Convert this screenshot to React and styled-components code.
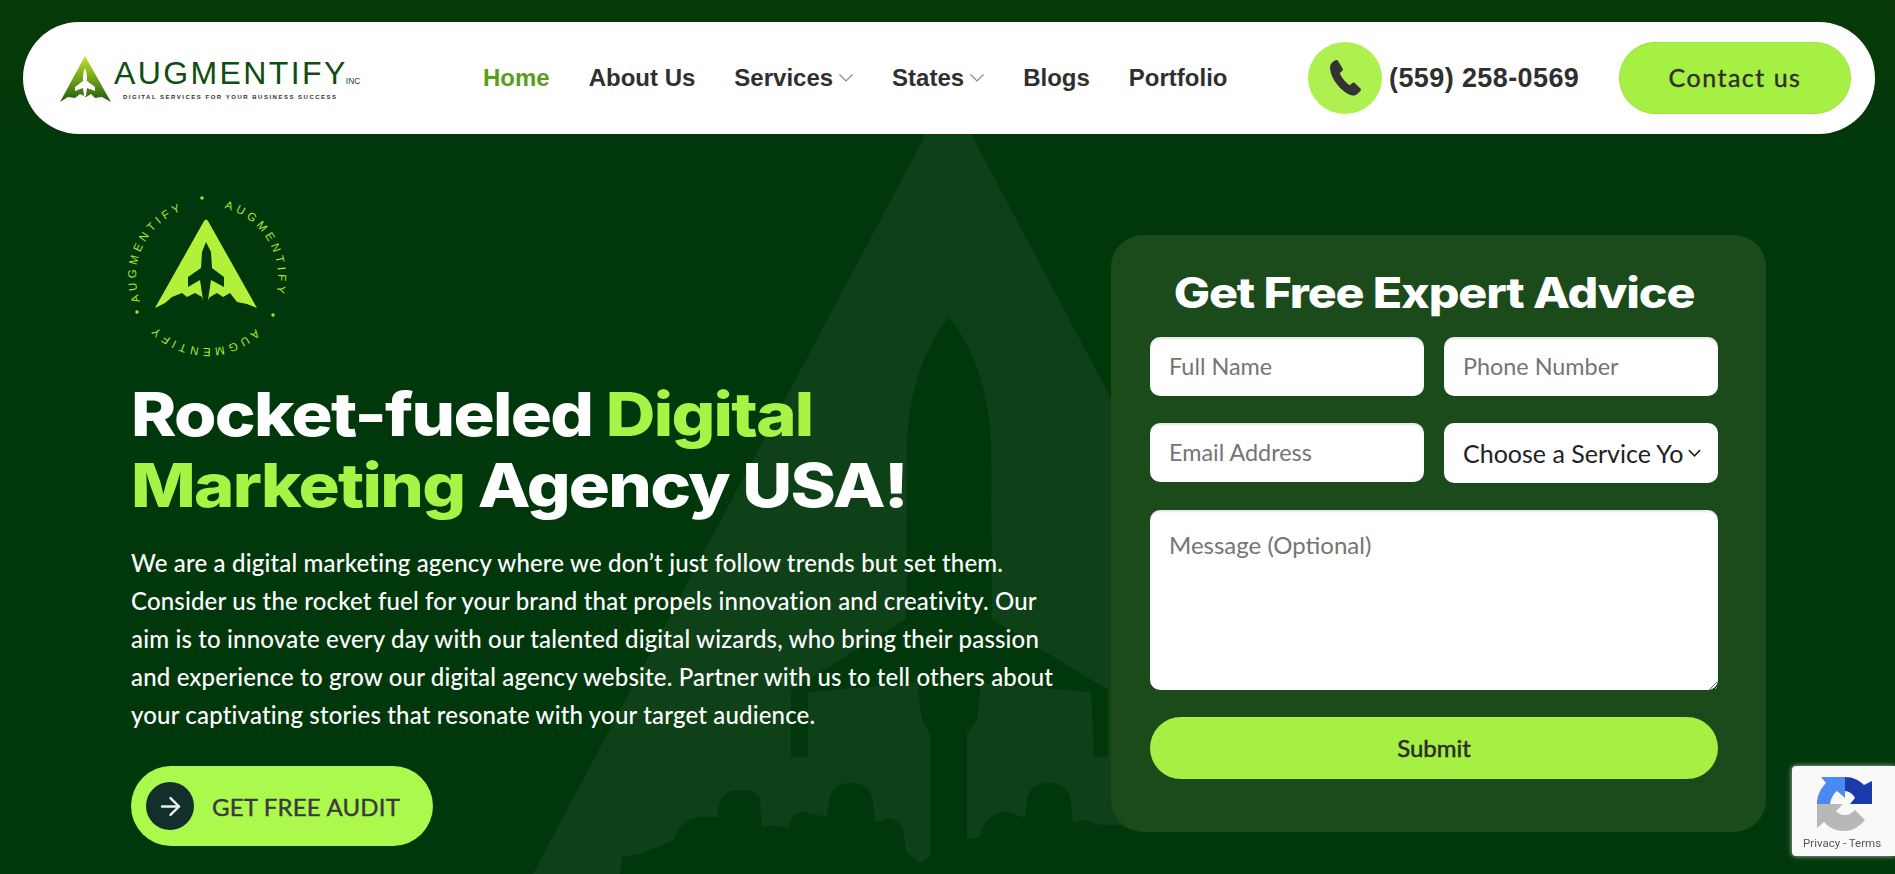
import styled, { createGlobalStyle } from "styled-components";
import { ChevronDown, ArrowRight } from "lucide-react";

const GlobalStyle = createGlobalStyle`
    html, body {
        margin: 0;
        padding: 0;
        background: #01380b;
    }
    * {
        box-sizing: border-box;
    }
`;

const navLinks = [
    { label: "Home", active: true },
    { label: "About Us" },
    { label: "Services", caret: true },
    { label: "States", caret: true },
    { label: "Blogs" },
    { label: "Portfolio" },
];

function Watermark() {
    return (
        <WatermarkSvg viewBox="0 0 1895 874" aria-hidden="true">
            <path fill="#0f4118" d="M926 134 L971 134 L1363 874 L533 874 Z" />
            {/* rocket cut out of the big A */}
            <path
                fill="#01380b"
                d="M949 317 C972 345 989 390 991 440 L992 619 L1108 690 L1108 757 L1094 757 L1091 692 L981 683 L977 720 L967 733 L967 860 L930 860 L930 733 L922 720 L917 683 L808 692 L808 757 L791 757 L791 690 L906 619 L907 440 C909 390 926 345 949 317 Z"
            />
            {/* exhaust clouds */}
            <path
                fill="#01380b"
                d="M620 874 L622 857 L643 853 L674 840 Q680 818 701 817 L718 817 Q716 790 739 790 Q762 790 760 803 L762 827 L774 825 L789 828 Q792 812 804 812 L827 817 L829 800 Q832 783 850 783 Q872 783 873 803 L875 822 L889 818 Q904 820 904 835 L906 852 L921 863 L938 850 L963 840 L980 837 Q985 812 1007 812 L1025 818 L1027 800 Q1030 783 1048 783 Q1070 783 1071 803 L1073 823 L1084 820 L1101 825 L1400 825 L1400 874 Z"
            />
        </WatermarkSvg>
    );
}

function LogoMark() {
    return (
        <svg width="51" height="46" viewBox="0 0 51 46">
            <defs>
                <linearGradient id="logoFill" x1="0" y1="0" x2="0" y2="1">
                    <stop offset="0" stopColor="#c0e52c" />
                    <stop offset="1" stopColor="#1f5c0b" />
                </linearGradient>
            </defs>
            <path
                fill="url(#logoFill)"
                d="M25 0 L51 46 L42 41 L35 42 L31 38 L26 41 L20 38 L15 42 L8 41 L0 46 Z"
            />
            <path
                fill="#fff"
                d="M25 12 C27 16 27 20 27 25 L35 31 L35 35 L27 32 L26 40 L24 40 L23 32 L15 35 L15 31 L23 25 C23 20 23 16 25 12 Z"
            />
        </svg>
    );
}

function Emblem() {
    return (
        <EmblemSvg viewBox="0 0 170 170">
            <defs>
                <path id="ringPath" d="M87 16 A71 71 0 1 1 86.99 16 Z" />
            </defs>
            <path
                fill="#b2f03a"
                d="M84 31 Q86 28 88 31 L137 118 L127 114 L117 112 L110 103 L103 107 L97 103 L90 107 L88 110 L83 110 L82 107 L75 103 L67 107 L62 103 L52 107 L45 113 L35 118 Z"
            />
            <path
                fill="#01380b"
                d="M86 52 L91 62 L92 78 L104 87 L104 97 L91 90 L88 110 L83 110 L80 90 L68 97 L68 87 L81 78 L82 62 Z"
            />
            <EmblemText>
                <textPath href="#ringPath" startOffset="3.9%">AUGMENTIFY</textPath>
            </EmblemText>
            <EmblemText>
                <textPath href="#ringPath" startOffset="38%">AUGMENTIFY</textPath>
            </EmblemText>
            <EmblemText>
                <textPath href="#ringPath" startOffset="69.4%">AUGMENTIFY</textPath>
            </EmblemText>
            <circle cx="82" cy="8" r="1.7" fill="#a6e83a" />
            <circle cx="17" cy="122" r="1.7" fill="#a6e83a" />
            <circle cx="153" cy="125" r="1.7" fill="#a6e83a" />
        </EmblemSvg>
    );
}

function CaptchaLogo() {
    return (
        <svg width="56" height="56" viewBox="0 0 56 56">
            <path fill="#4a8af4" d="M0 28 C0 19 4 12 9 7 L4 1 L28 1 L28 22 L20 15 C17 17 14 22 13 28 Z" />
            <path fill="#1c3aa9" d="M28 1 C36 1 42 4 47 9 L55 5 L55 28 L33 28 L38 22 C36 18 32 15 28 15 Z" />
            <path fill="#b8b8b8" d="M0 28 L26 28 L19 35 C22 38 25 39 28 39 C32 39 35 37 38 34 L48 44 C43 50 36 55 28 55 C19 55 12 52 7 46 L0 52 Z" />
        </svg>
    );
}

function App() {
    return (
        <Page>
            <GlobalStyle />
            <Watermark />
            <Navbar>
                <Logo>
                    <LogoMark />
                    <LogoWords>
                        <LogoName>AUGMENTIFY<LogoInc>INC</LogoInc></LogoName>
                        <LogoTag>DIGITAL SERVICES FOR YOUR BUSINESS SUCCESS</LogoTag>
                    </LogoWords>
                </Logo>
                <NavList>
                    {navLinks.map((link) => (
                        <NavItem key={link.label} $active={link.active}>
                            {link.label}
                            {link.caret && (
                                <Caret viewBox="0 0 14 8">
                                    <polyline points="0.5,0.5 7,7 13.5,0.5" />
                                </Caret>
                            )}
                        </NavItem>
                    ))}
                </NavList>
                <PhoneGroup>
                    <PhoneCircle>
                        <svg width="42" height="42" viewBox="0 0 24 24" fill="#333">
                            <path d="M6.6 1.8 C5.4 2.3 4 3.4 3.6 4.8 C3 7.4 4.4 11.4 7 15 C9.6 18.6 13 21.4 16.2 22 C17.6 22.2 18.4 21.6 19.2 21 L20.8 19.4 C21.2 19 21.2 18.4 20.8 18 L17.6 14.8 C17.2 14.4 16.6 14.4 16.2 14.8 L14.8 16.2 C13 15.4 9.6 11.4 9 9.2 L10.4 8 C10.8 7.6 10.8 7 10.6 6.6 L8 2.2 C7.7 1.7 7.1 1.6 6.6 1.8 Z" />
                        </svg>
                    </PhoneCircle>
                    <PhoneNumber>(559) 258-0569</PhoneNumber>
                </PhoneGroup>
                <ContactButton>Contact us</ContactButton>
            </Navbar>

            <Hero>
                <HeroCopy>
                    <Emblem />
                    <Headline>
                        Rocket-fueled <Accent>Digital</Accent>
                        <br />
                        <Accent>Marketing</Accent> Agency USA!
                    </Headline>
                    <Lead>
                        We are a digital marketing agency where we don’t just follow trends but set them.
                        <br />
                        Consider us the rocket fuel for your brand that propels innovation and creativity. Our
                        <br />
                        aim is to innovate every day with our talented digital wizards, who bring their passion
                        <br />
                        and experience to grow our digital agency website. Partner with us to tell others about
                        <br />
                        your captivating stories that resonate with your target audience.
                    </Lead>
                    <AuditButton>
                        <AuditIcon>
                            <ArrowRight size={29} strokeWidth={2} color="#eee" />
                        </AuditIcon>
                        GET FREE AUDIT
                    </AuditButton>
                </HeroCopy>

                <FormCard>
                    <FormTitle>Get Free Expert Advice</FormTitle>
                    <FieldGrid>
                        <Field placeholder="Full Name" />
                        <Field placeholder="Phone Number" />
                        <Field placeholder="Email Address" />
                        <ServiceSelect>
                            <ServiceText>Choose a Service Yo</ServiceText>
                            <ServiceCaret viewBox="0 0 14 8">
                                <polyline points="1,1 7,7 13,1" />
                            </ServiceCaret>
                        </ServiceSelect>
                    </FieldGrid>
                    <MessageBox placeholder="Message (Optional)" />
                    <SubmitButton>Submit</SubmitButton>
                </FormCard>
            </Hero>

            <CaptchaBadge>
                <CaptchaLogo />
                <CaptchaLinks>Privacy - Terms</CaptchaLinks>
            </CaptchaBadge>
        </Page>
    );
}

const Page = styled.div`
    position: relative;
    height: 874px;
    overflow: hidden;
    background: linear-gradient(#073a08, #01380b 150px);
    padding: 22px 20px 0 23px;
    font-family: "Liberation Sans", Arial, sans-serif;
`;

const WatermarkSvg = styled.svg`
    position: absolute;
    left: 0;
    top: 0;
    width: 1895px;
    height: 874px;
`;

const Navbar = styled.header`
    position: relative;
    height: 112px;
    background: #fff;
    border-radius: 56px;
    display: flex;
    align-items: center;
    padding: 0 24px 0 37px;
`;

const Logo = styled.div`
    display: flex;
    align-items: center;
    gap: 3px;
    width: 423px;
    padding-top: 2px;
`;

const LogoWords = styled.div`
    display: flex;
    flex-direction: column;
    margin-top: 2px;
`;

const LogoName = styled.div`
    font-size: 32px;
    line-height: 26px;
    color: #0f4d12;
    letter-spacing: 2.4px;
    white-space: nowrap;
`;

const LogoInc = styled.span`
    font-size: 8.5px;
    letter-spacing: 0;
    margin-left: -2px;
`;

const LogoTag = styled.div`
    font-size: 6px;
    line-height: 7px;
    font-weight: 700;
    letter-spacing: 1.5px;
    color: #1c3a1c;
    margin-left: 9px;
    white-space: nowrap;
`;

const NavList = styled.nav`
    display: flex;
    align-items: center;
    gap: 39px;
    width: 825px;
`;

const NavItem = styled.a`
    display: flex;
    align-items: center;
    font-size: 24px;
    font-weight: 700;
    color: ${(p) => (p.$active ? "#5a9e1c" : "#2f2f2f")};
`;

const Caret = styled.svg`
    width: 14px;
    height: 8px;
    margin-left: 6px;
    fill: none;
    stroke: #888;
    stroke-width: 1.2;
`;

const PhoneGroup = styled.div`
    display: flex;
    align-items: center;
    gap: 7px;
    width: 311px;
`;

const PhoneCircle = styled.div`
    width: 74px;
    height: 72px;
    border-radius: 50%;
    background: #adf04f;
    display: flex;
    align-items: center;
    justify-content: center;
`;

const PhoneNumber = styled.span`
    font-size: 27px;
    font-weight: 700;
    letter-spacing: 0.4px;
    color: #2f2f2f;
`;

const ContactButton = styled.button`
    width: 232px;
    height: 72px;
    border: 1px solid #9be23f;
    border-radius: 36px;
    background: #a6ef43;
    font-family: "Lato", sans-serif;
    font-size: 25px;
    letter-spacing: 1.5px;
    -webkit-text-stroke: 0.4px #2f2f2f;
    color: #2f2f2f;
    padding-bottom: 3px;
`;

const Hero = styled.main`
    position: relative;
    display: flex;
    justify-content: space-between;
    padding: 56px 109px 0 108px;
`;

const HeroCopy = styled.div`
    width: 950px;
    display: flex;
    flex-direction: column;
    align-items: flex-start;
`;

const EmblemSvg = styled.svg`
    width: 170px;
    height: 170px;
    margin-left: -11px;
`;

const EmblemText = styled.text`
    font-family: "Liberation Sans", sans-serif;
    font-size: 11.5px;
    letter-spacing: 3.8px;
    fill: #a6e83a;
`;

const Headline = styled.h1`
    margin: 19px 0 0;
    font-family: "Inter", sans-serif;
    font-size: 60px;
    font-weight: 800;
    line-height: 71px;
    letter-spacing: -1.5px;
    color: #fff;
    white-space: nowrap;
    transform: scaleX(1.145);
    transform-origin: left center;
`;

const Accent = styled.span`
    color: #a8f446;
`;

const Lead = styled.p`
    margin: 23px 0 0;
    font-family: "Lato", sans-serif;
    font-size: 24px;
    line-height: 38px;
    letter-spacing: 0.17px;
    font-weight: 500;
    color: #fff;
    white-space: nowrap;
`;

const AuditButton = styled.button`
    margin-top: 32px;
    width: 302px;
    height: 80px;
    border: none;
    border-radius: 40px;
    background: #aaf94c;
    display: flex;
    align-items: center;
    gap: 18px;
    padding: 0 0 0 15px;
    font-family: "Lato", sans-serif;
    font-size: 24px;
    letter-spacing: 0.2px;
    -webkit-text-stroke: 0.4px #3a3a3a;
    color: #3a3a3a;
`;

const AuditIcon = styled.span`
    width: 48px;
    height: 48px;
    border-radius: 50%;
    background: #132f2b;
    display: flex;
    align-items: center;
    justify-content: center;
`;

const FormCard = styled.section`
    width: 655px;
    height: 597px;
    margin-top: 45px;
    padding: 33px 48px 0 39px;
    border-radius: 32px;
    background: #1b4a1b;
    display: flex;
    flex-direction: column;
`;

const FormTitle = styled.h2`
    margin: 0;
    text-align: center;
    font-family: "Inter", sans-serif;
    font-size: 42px;
    line-height: 50px;
    font-weight: 800;
    letter-spacing: -1px;
    color: #fff;
    white-space: nowrap;
    transform: scaleX(1.15);
`;

const FieldGrid = styled.div`
    margin-top: 19px;
    display: grid;
    grid-template-columns: 274px 274px;
    column-gap: 20px;
    row-gap: 27px;
    align-items: start;
`;

const Field = styled.input`
    width: 100%;
    height: 59px;
    border: none;
    border-radius: 10px;
    background: #fff;
    box-shadow: inset 0 2px 2px rgba(0, 0, 0, 0.1);
    padding: 0 19px 1px;
    font-family: "Lato", sans-serif;
    font-size: 23.4px;
    &::placeholder {
        color: #757575;
    }
`;

const ServiceSelect = styled.div`
    height: 60px;
    border-radius: 10px;
    background: #fff;
    display: flex;
    align-items: center;
    padding: 0 17px 0 19px;
`;

const ServiceText = styled.span`
    flex: 1;
    white-space: nowrap;
    font-family: "Lato", sans-serif;
    font-size: 25px;
    color: #222;
`;

const ServiceCaret = styled.svg`
    flex-shrink: 0;
    width: 13px;
    height: 8px;
    fill: none;
    stroke: #222;
    stroke-width: 1.8;
`;

const MessageBox = styled.textarea`
    width: 568px;
    height: 180px;
    margin-top: 27px;
    border: none;
    border-radius: 10px;
    background: #fff;
    box-shadow: inset 0 2px 2px rgba(0, 0, 0, 0.1);
    padding: 20px 19px;
    font-family: "Lato", sans-serif;
    font-size: 24px;
    resize: vertical;
    &::placeholder {
        color: #757575;
    }
`;

const SubmitButton = styled.button`
    width: 568px;
    height: 62px;
    margin-top: 27px;
    padding-bottom: 3px;
    border: none;
    border-radius: 31px;
    background: #a6ef43;
    font-family: "Lato", sans-serif;
    font-size: 24px;
    -webkit-text-stroke: 0.5px #2b2b2b;
    color: #2b2b2b;
`;

const CaptchaBadge = styled.aside`
    position: fixed;
    right: 0;
    top: 766px;
    width: 103px;
    height: 90px;
    border-radius: 4px 0 0 4px;
    background: #f9f9f9;
    box-shadow: 0 0 5px rgba(200, 200, 200, 0.9);
    display: flex;
    flex-direction: column;
    align-items: flex-start;
    padding: 10px 0 0 25px;
`;

const CaptchaLinks = styled.div`
    margin: 4px 0 0 -14px;
    font-family: "Roboto", sans-serif;
    font-size: 11.5px;
    color: #555;
    white-space: nowrap;
`;

export default App;
